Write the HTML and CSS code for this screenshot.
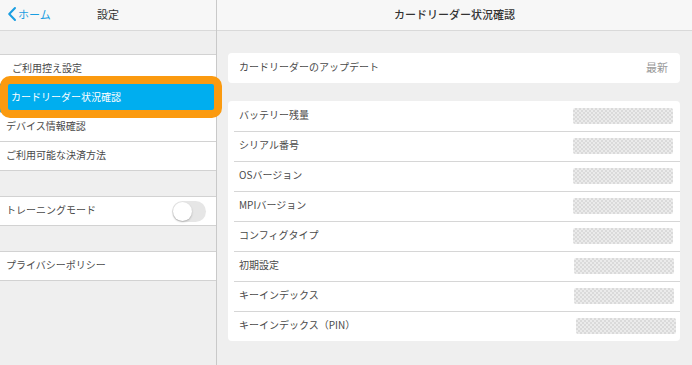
FILE: index.html
```html
<!DOCTYPE html>
<html lang="ja">
<head>
<meta charset="utf-8">
<link rel="stylesheet" href="styles.css">
</head>
<body>
<div class="app">
  <aside class="side">
    <header class="side-head">
      <div class="back">
        <svg class="chev" width="10" height="16" viewBox="0 0 10 16"><polyline points="8,2 2.2,8 8,14" fill="none" stroke="#1a9ee2" stroke-width="2" stroke-linecap="round" stroke-linejoin="round"/></svg>
        <span>ホーム</span>
      </div>
      <div class="head-title">設定</div>
    </header>
    <div class="side-body">
      <div class="group">
        <div class="row r-indent">ご利用控え設定</div>
        <div class="row selected"><span>カードリーダー状況確認</span><div class="mark"></div></div>
        <div class="row">デバイス情報確認</div>
        <div class="row">ご利用可能な決済方法</div>
      </div>
      <div class="group">
        <div class="row toggle-row"><span>トレーニングモード</span><div class="toggle"><div class="knob"></div></div></div>
      </div>
      <div class="group">
        <div class="row">プライバシーポリシー</div>
      </div>
    </div>
  </aside>
  <main class="main">
    <header class="main-head">カードリーダー状況確認</header>
    <div class="main-body">
      <div class="card single">
        <div class="crow"><span>カードリーダーのアップデート</span><span class="val">最新</span></div>
      </div>
      <div class="card list">
        <div class="crow"><span>バッテリー残量</span><span class="redact"></span></div>
        <div class="crow"><span>シリアル番号</span><span class="redact"></span></div>
        <div class="crow"><span>OSバージョン</span><span class="redact"></span></div>
        <div class="crow"><span>MPIバージョン</span><span class="redact"></span></div>
        <div class="crow"><span>コンフィグタイプ</span><span class="redact"></span></div>
        <div class="crow"><span>初期設定</span><span class="redact r1"></span></div>
        <div class="crow"><span>キーインデックス</span><span class="redact r1"></span></div>
        <div class="crow"><span>キーインデックス（PIN）</span><span class="redact r2"></span></div>
      </div>
    </div>
  </main>
</div>
</body>
</html>
```

FILE: styles.css
```css
* { box-sizing: border-box; }
html, body { margin: 0; padding: 0; }
body {
  width: 692px;
  height: 365px;
  overflow: hidden;
  font-family: "Noto Sans CJK JP", "Noto Sans", sans-serif;
  background: #efefef;
  color: #4a4a4a;
}
.app { display: flex; height: 365px; }

.side {
  width: 217px;
  flex: none;
  border-right: 1px solid #c9c9c9;
  background: #efefef;
  position: relative;
  z-index: 2;
}
.side-head {
  height: 31px;
  background: #f7f7f7;
  border-bottom: 1px solid #d9d9d9;
  position: relative;
  display: flex;
  align-items: center;
  padding-bottom: 2px;
}
.back {
  display: flex;
  align-items: center;
  padding-left: 7px;
  gap: 1px;
  color: #1a9ee2;
  font-size: 11px;
}
.chev { display: block; }
.head-title {
  position: absolute;
  left: 0; right: 0; top: 0;
  line-height: 28px;
  text-align: center;
  font-size: 11px;
  color: #333;
  pointer-events: none;
}
.side-body { padding-top: 23px; display: flex; flex-direction: column; gap: 25px; }
.group { border-top: 1px solid #d2d2d2; background: #fff; }
.row {
  height: 29px;
  border-bottom: 1px solid #d2d2d2;
  font-size: 10px;
  line-height: 14px;
  padding: 0 0 3px 6px;
  color: #4a4a4a;
  display: flex;
  align-items: center;
  white-space: nowrap;
}
.r-indent { padding-left: 12px; }
.selected {
  background: #00aeef;
  color: #fff;
  padding-left: 11px;
  position: relative;
}
.mark {
  position: absolute;
  left: 0;
  top: -8px;
  width: 222px;
  height: 42px;
  border: 8px solid #fb9a0f;
  border-radius: 10px;
}
.toggle-row { justify-content: space-between; padding-right: 10px; padding-bottom: 0; }
.toggle-row span { margin-bottom: 3px; }
.toggle {
  width: 34px;
  height: 21px;
  border-radius: 11px;
  background: #e6e6e6;
  position: relative;
}
.knob {
  position: absolute;
  left: 1px; top: 1px;
  width: 19px; height: 19px;
  border-radius: 50%;
  background: #fff;
  box-shadow: 0 1px 2px rgba(0,0,0,0.25);
}

.main { flex: 1; display: flex; flex-direction: column; }
.main-head {
  height: 31px;
  background: #f7f7f7;
  border-bottom: 1px solid #d9d9d9;
  text-align: center;
  line-height: 28px;
  font-size: 11px;
  font-weight: 500;
  color: #333;
}
.main-body {
  padding: 22px 12px 0 11px;
  display: flex;
  flex-direction: column;
  gap: 18px;
}
.card { background: #fff; border-radius: 4px; }
.crow {
  height: 30px;
  display: flex;
  align-items: center;
  justify-content: space-between;
  padding: 0 6px 0 11px;
  font-size: 10px;
  color: #4a4a4a;
  position: relative;
}
.crow > span:first-child { margin-bottom: 3px; }
.list .crow + .crow::before {
  content: "";
  position: absolute;
  left: 6px; right: 0; top: 0;
  border-top: 1px solid #d6d6d6;
}
.single .crow { padding-right: 12px; }
.val { color: #9a9a9a; font-size: 11px; margin-bottom: 3px; }
.redact {
  width: 100px;
  height: 16px;
  border-radius: 2px;
  background: repeating-conic-gradient(#dadada 0 25%, #ebebeb 0 50%) 0 0 / 4px 4px;
  margin-right: 1px;
}
.r1 { margin-right: 0; }
.r2 { margin-right: -2px; }
```
